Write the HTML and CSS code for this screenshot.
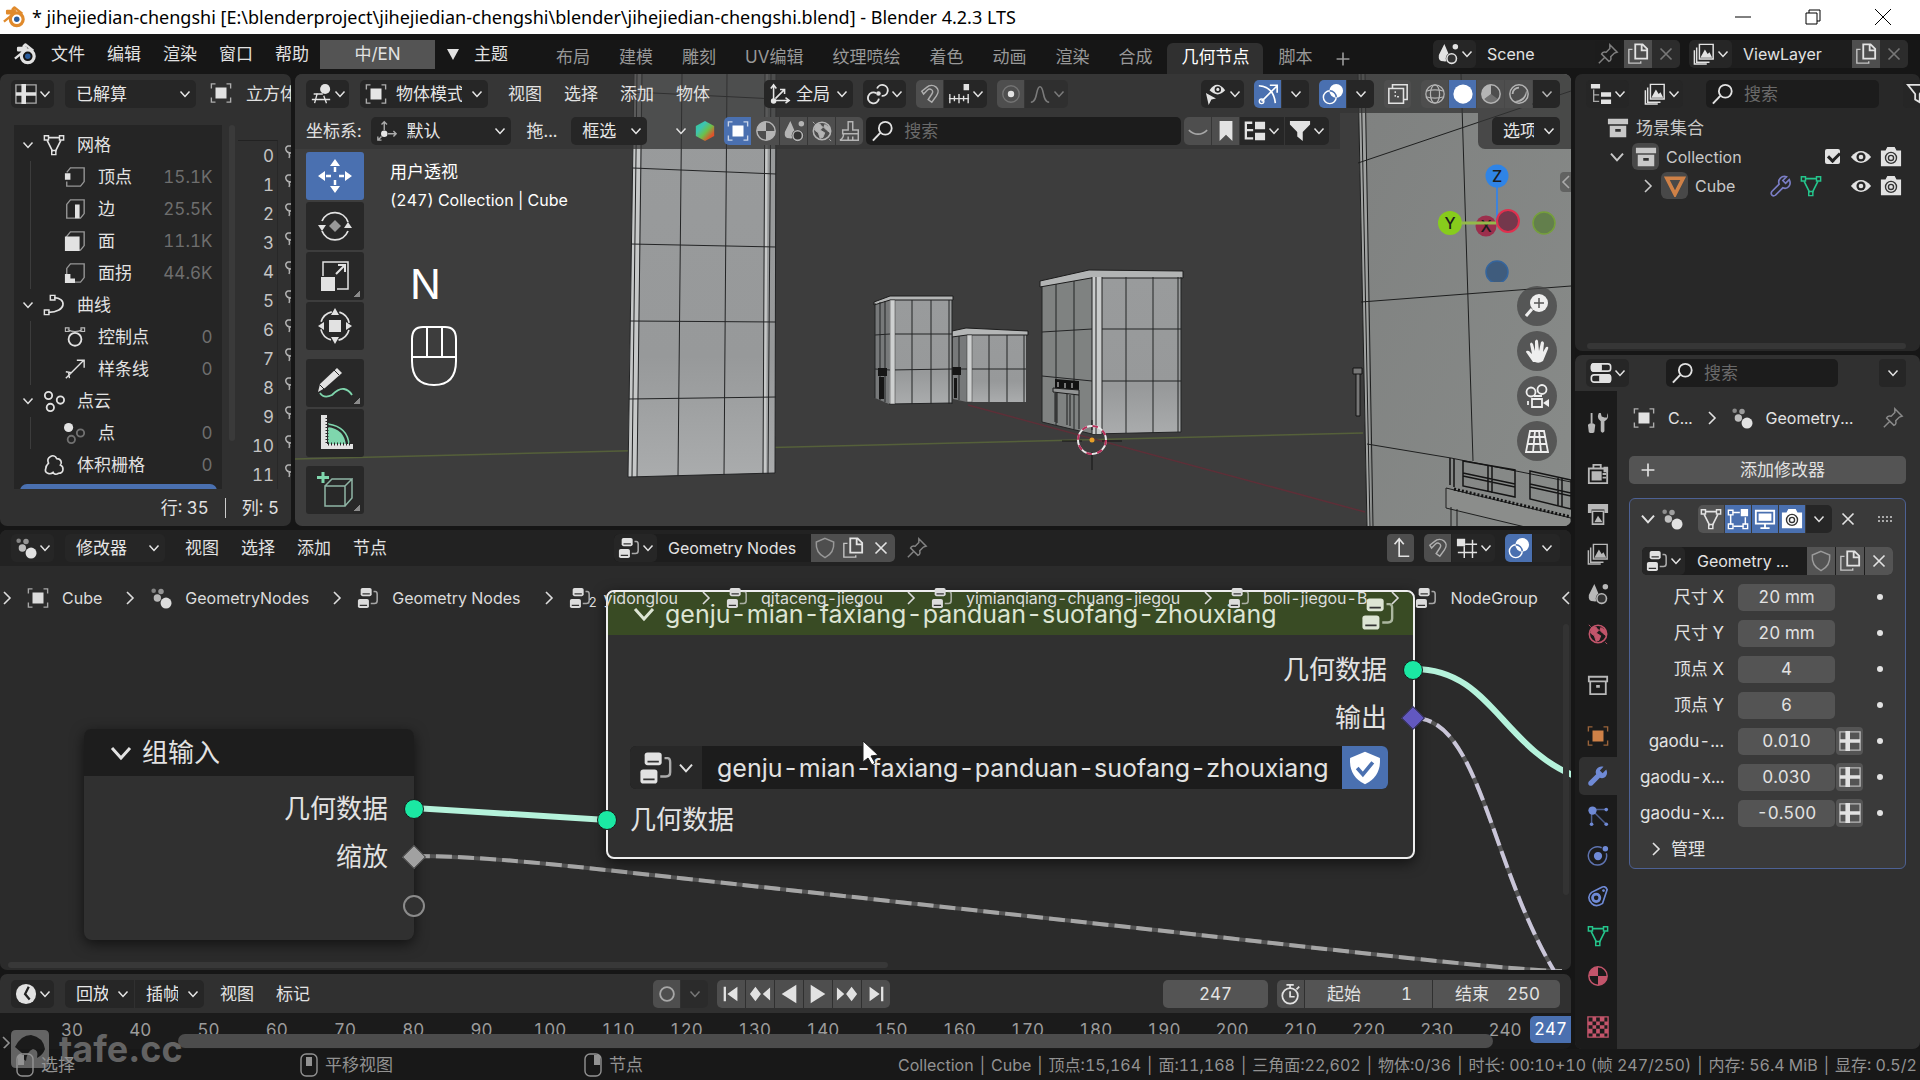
FILE: index.html
```html
<!DOCTYPE html>
<html lang="zh-CN">
<head>
    <meta charset="UTF-8">
    <meta name="viewport" content="width=device-width, initial-scale=1.0">
    <title>jihejiedian-chengshi - Blender 4.2.3 LTS</title>
    <link rel="stylesheet" href="styles.css">
</head>
<body>
    <!-- icon sprite -->
    <svg class="sprite" aria-hidden="true">
        <symbol id="i-logo" viewBox="0 0 24 24"><path d="M1 17L12 8H4.500V5.500H13L10.500 3.500 12.500 1.500 21 8.500" fill="none" stroke="currentColor" stroke-width="2.600" stroke-linejoin="round"/><circle cx="15" cy="14.500" r="7" fill="none" stroke="currentColor" stroke-width="3.500"/><circle class="logo-dot" cx="15" cy="14.500" r="3"/></symbol>
        <symbol id="i-chev" viewBox="0 0 12 12"><path d="M1.500 3.500L6 8.500l4.500-5" fill="none" stroke="currentColor" stroke-width="1.500"/></symbol>
        <symbol id="i-right" viewBox="0 0 12 16"><path d="M3 2l6 6-6 6" fill="none" stroke="currentColor" stroke-width="1.600"/></symbol>
        <symbol id="i-left" viewBox="0 0 12 16"><path d="M9 2L3 8l6 6" fill="none" stroke="currentColor" stroke-width="1.600"/></symbol>
        <symbol id="i-x" viewBox="0 0 24 24"><path d="M6 6l12 12M18 6L6 18" stroke="currentColor" stroke-width="1.800"/></symbol>
        <symbol id="i-plus" viewBox="0 0 24 24"><path d="M12 5v14M5 12h14" stroke="currentColor" stroke-width="1.800"/></symbol>
        <symbol id="i-sheet" viewBox="0 0 24 24"><path d="M1 2h22v20H1z" fill="none" stroke="currentColor" stroke-width="1.500" opacity=".7"/><path d="M7 1h5v22H7zM1 10h22v4H1z" fill="currentColor"/></symbol>
        <symbol id="i-object" viewBox="0 0 24 24"><path d="M1.500 7V2H6M18 2h4.500v5M22.500 17v5H18M6 22H1.500v-5" fill="none" stroke="currentColor" stroke-width="1.500" opacity=".7"/><path d="M6 6h12v12H6z" fill="currentColor"/></symbol>
        <symbol id="i-view3d" viewBox="0 0 24 24"><path d="M4 12h10M2 18h20M8 11l-3 11M15 14l3 8" stroke="currentColor" stroke-width="1.500" fill="none"/><circle cx="16.500" cy="6.500" r="5.500" fill="currentColor"/></symbol>
        <symbol id="i-mesh" viewBox="0 0 24 24"><path d="M6 4h12M4.500 7l6 12M19.500 7l-6 12" stroke="currentColor" stroke-width="1.800"/><path d="M1.500 2H6v4.500H1.500zM18 2h4.500v4.500H18zM9.500 18H14v4.500H9.500z" fill="none" stroke="currentColor" stroke-width="1.600"/></symbol>
        <symbol id="i-vert" viewBox="0 0 24 24"><path d="M3 7l4-5h15v15l-4 5H3v-5" fill="none" stroke="currentColor" stroke-width="1.500" opacity=".6"/><path d="M1 8h6v7H1z" fill="currentColor"/></symbol>
        <symbol id="i-edge" viewBox="0 0 24 24"><path d="M3 7l4-5h15v15l-4 5H3z" fill="none" stroke="currentColor" stroke-width="1.500" opacity=".6"/><path d="M12 7h5v15h-5z" fill="currentColor"/></symbol>
        <symbol id="i-face" viewBox="0 0 24 24"><path d="M3 7l4-5h15v15l-4 5H3z" fill="none" stroke="currentColor" stroke-width="1.500" opacity=".6"/><path d="M1 7h16v16H1z" fill="currentColor"/></symbol>
        <symbol id="i-corner" viewBox="0 0 24 24"><path d="M3 13V7l4-5h15v15l-4 5h-6" fill="none" stroke="currentColor" stroke-width="1.500" opacity=".6"/><path d="M1 13h6v5h5v5H1z" fill="currentColor"/></symbol>
        <symbol id="i-curve" viewBox="0 0 24 24"><path d="M12 4c14 0 14 16-6 16" fill="none" stroke="currentColor" stroke-width="1.800"/><path d="M8 1.500h5v5H8zM1.500 17.500h5v5h-5z" fill="none" stroke="currentColor" stroke-width="1.600"/></symbol>
        <symbol id="i-ctrl" viewBox="0 0 24 24"><circle cx="12" cy="14.500" r="7" fill="none" stroke="currentColor" stroke-width="2"/><path d="M4 4q8 4 16 0M1.500 2h4v4h-4zM18.500 2h4v4h-4z" fill="none" stroke="currentColor" stroke-width="1.200" opacity=".8"/></symbol>
        <symbol id="i-spline" viewBox="0 0 24 24"><path d="M2 22L21 3M14 2.500h8v8M2 15l6 1M6 22l-1-6" fill="none" stroke="currentColor" stroke-width="1.500"/></symbol>
        <symbol id="i-cloud3" viewBox="0 0 24 24"><g fill="none" stroke="currentColor" stroke-width="2"><circle cx="6" cy="6" r="4"/><circle cx="19" cy="11" r="4"/><circle cx="8" cy="19" r="4"/></g></symbol>
        <symbol id="i-point" viewBox="0 0 24 24"><circle cx="5" cy="6" r="5" fill="currentColor"/><g fill="none" stroke="currentColor" stroke-width="2" opacity=".4"><circle cx="18" cy="12" r="4"/><circle cx="8" cy="19" r="4"/></g></symbol>
        <symbol id="i-volume" viewBox="0 0 24 24"><path d="M6 10C3 3 12-1 15 5c5 0 6 5 4 7 4 2 4 9-2 9-3 2-5 1-6-1-3 3-10 1-8-4 0-3 1-4 3-6z" fill="none" stroke="currentColor" stroke-width="1.800"/></symbol>
        <symbol id="i-axes" viewBox="0 0 24 24"><path d="M5 21V3M2 6l3-4 3 4M5 19h16M18 16l4 3-4 3M7 17L17 7M12 7h5v5" fill="none" stroke="currentColor" stroke-width="1.700"/><circle cx="5" cy="19.500" r="3" fill="currentColor"/></symbol>
        <symbol id="i-orient" viewBox="0 0 24 24"><path d="M9 11V2M6 5l3-3 3 3M13 15h9M19 12l3 3-3 3M6 18l-4 4M2 18v4h4" fill="none" stroke="currentColor" stroke-width="1.500" opacity=".7"/><circle cx="9" cy="15" r="3.500" fill="currentColor"/></symbol>
        <symbol id="i-pivot" viewBox="0 0 24 24"><g fill="none" stroke="currentColor" stroke-width="2"><path d="M10 11a6 6 0 1 0 3 6M11 6a6 6 0 1 1 5 8"/></g><circle cx="12.500" cy="11.500" r="2.500" fill="currentColor"/></symbol>
        <symbol id="i-magnet" viewBox="0 0 24 24"><path d="M3 9l5-4C15-1 25 6 19 14l-5 7-4-3 4-6c3-4-2-7-5-4l-4 4z" fill="none" stroke="currentColor" stroke-width="1.600" opacity=".65"/></symbol>
        <symbol id="i-snapinc" viewBox="0 0 24 24"><path d="M1 17h22M2 12v10M7 14v6M12 12v10M17 14v6M22 12v10" stroke="currentColor" stroke-width="1.500"/><path d="M17 1h6v7h-6z" fill="currentColor"/></symbol>
        <symbol id="i-prop" viewBox="0 0 24 24"><circle cx="12" cy="12" r="9" fill="none" stroke="currentColor" stroke-width="1.500" opacity=".25"/><circle cx="12" cy="12" r="3.500" fill="currentColor"/></symbol>
        <symbol id="i-falloff" viewBox="0 0 24 24"><path d="M2 21c8 0 5-17 10-17s2 17 10 17" fill="none" stroke="currentColor" stroke-width="1.700"/></symbol>
        <symbol id="i-eyecursor" viewBox="0 0 24 24"><path d="M5 8q8-12 17 0-8 9-17 0z" fill="currentColor"/><circle cx="14" cy="7" r="3.500" fill="#222"/><circle cx="14" cy="7" r="1.700" fill="currentColor"/><path d="M1 11l11 6-5 1-3 6z" fill="currentColor"/></symbol>
        <symbol id="i-gizmo" viewBox="0 0 24 24"><path d="M2 3q16 1 18 19M5 20L22 3M14 2.500h8v8" fill="none" stroke="currentColor" stroke-width="1.800"/><circle cx="5" cy="20" r="2.500" fill="none" stroke="currentColor" stroke-width="1.500"/></symbol>
        <symbol id="i-overlay" viewBox="0 0 24 24"><circle cx="15.500" cy="8.500" r="7.500" fill="currentColor"/><circle cx="8.500" cy="15.500" r="7" fill="none" stroke="currentColor" stroke-width="1.600"/><path d="M8.500 8.500a7 7 0 0 1 7 7" fill="none" stroke="#4a70b0" stroke-width="1.600"/></symbol>
        <symbol id="i-xray" viewBox="0 0 24 24"><path d="M2 6h16v16H2zM6 6V2h16v16h-4" fill="none" stroke="currentColor" stroke-width="1.700"/><path d="M9 9v6h6" fill="none" stroke="currentColor" stroke-width="1.500" stroke-dasharray="2 2"/></symbol>
        <symbol id="i-wire" viewBox="0 0 24 24"><g fill="none" stroke="currentColor" stroke-width="1.400"><circle cx="12" cy="12" r="10"/><ellipse cx="12" cy="12" rx="5" ry="10"/><path d="M2 9q10-3 20 0M2 15q10 3 20 0"/></g></symbol>
        <symbol id="i-solid" viewBox="0 0 24 24"><circle cx="12" cy="12" r="10.500" fill="currentColor"/></symbol>
        <symbol id="i-mat" viewBox="0 0 24 24"><circle cx="12" cy="12" r="10" fill="none" stroke="currentColor" stroke-width="1.600"/><path d="M12 2v10h-10A10 10 0 0 1 12 2zM12 12h10a10 10 0 0 1-10 10z" fill="currentColor"/></symbol>
        <symbol id="i-preview" viewBox="0 0 24 24"><circle cx="12" cy="12" r="10" fill="none" stroke="currentColor" stroke-width="1.600"/><path d="M12 2v10l-8 6A10 10 0 0 1 12 2z" fill="currentColor"/><path d="M12 12l8 6a10 10 0 0 1-16 0z" fill="currentColor" opacity=".35"/></symbol>
        <symbol id="i-rendered" viewBox="0 0 24 24"><circle cx="12" cy="12" r="10" fill="none" stroke="currentColor" stroke-width="1.600"/><path d="M5 12a7 7 0 0 1 7-7" fill="none" stroke="currentColor" stroke-width="2"/><path d="M20 8a10 10 0 0 1-13 12q11-1 13-12z" fill="currentColor"/></symbol>
        <symbol id="i-hex" viewBox="0 0 24 24"><linearGradient id="hexg" x1="0" y1="0" x2="1" y2="1"><stop offset="0" stop-color="#35c98a"/><stop offset=".3" stop-color="#3cc4b4"/><stop offset=".55" stop-color="#6cc04a"/><stop offset=".8" stop-color="#e0522a"/></linearGradient><path d="M12 1l10 5.500v11L12 23 2 17.500v-11z" fill="url(#hexg)"/></symbol>
        <symbol id="i-scene" viewBox="0 0 24 24"><path d="M8 1l6 14q-1 6-7 5-6 0-5-7z" fill="currentColor"/><circle cx="20" cy="4" r="3" fill="currentColor"/><circle cx="16" cy="17" r="6.500" fill="#333"/><circle cx="16" cy="17" r="5.200" fill="none" stroke="currentColor" stroke-width="1.700"/></symbol>
        <symbol id="i-world" viewBox="0 0 24 24"><circle cx="12" cy="12" r="9.500" fill="none" stroke="currentColor" stroke-width="1.700"/><path d="M5 5q5-2 6 1l2 2-3 3 5 3-2 5-3 1-2-6-4-3zM15 5l5 3 1 6-4-3-3-3zM2 2l2 2M20 21l2 2" fill="currentColor" stroke="currentColor"/></symbol>
        <symbol id="i-brush" viewBox="0 0 24 24"><path d="M10 11V2h5v9h6v4H4v-4zM5 15q0 5-4 7h20v-7M10 18v4M15 18v4" fill="none" stroke="currentColor" stroke-width="1.600"/></symbol>
        <symbol id="i-search" viewBox="0 0 24 24"><circle cx="14.500" cy="9" r="7" fill="none" stroke="currentColor" stroke-width="2"/><path d="M9 14l-8 8.500" stroke="currentColor" stroke-width="2.200"/></symbol>
        <symbol id="i-lid" viewBox="0 0 24 24"><path d="M2 11q10 9 20 0" fill="none" stroke="currentColor" stroke-width="1.800" opacity=".6"/></symbol>
        <symbol id="i-bookmark" viewBox="0 0 24 24"><path d="M5 1h14v22l-7-7-7 7z" fill="currentColor"/></symbol>
        <symbol id="i-tree" viewBox="0 0 24 24"><path d="M9 3H2v17h8M2 11h8" fill="none" stroke="currentColor" stroke-width="2.500"/><path d="M12 2h11v8H12zM12 14h11v8H12z" fill="currentColor"/></symbol>
        <symbol id="i-filter" viewBox="0 0 24 24"><path d="M1 1h22v4l-8 8v10l-6-5v-5L1 5z" fill="currentColor"/></symbol>
        <symbol id="i-filterline" viewBox="0 0 24 24"><path d="M2 2h20l-7 10v9l-5-3v-6z" fill="none" stroke="currentColor" stroke-width="2"/></symbol>
        <symbol id="i-outliner" viewBox="0 0 24 24"><path d="M4 7v13h6M4 13h6" fill="none" stroke="currentColor" stroke-width="1.500" opacity=".7"/><path d="M1 1h10v5H1zM12 10h11v5H12zM12 18h11v5H12z" fill="currentColor"/></symbol>
        <symbol id="i-layers" viewBox="0 0 24 24"><path d="M7 1.500h15v16H7zM4 5v16h14M1.500 8v15H15" fill="none" stroke="currentColor" stroke-width="1.600"/><path d="M8 16l5-9 3 5 2-2 3 6z" fill="currentColor"/></symbol>
        <symbol id="i-pin" viewBox="0 0 24 24"><path d="M14 2l8 8-3 1-4 4q1 4-2 5l-8-8q1-3 5-2l4-4zM8 16l-6 6" fill="none" stroke="currentColor" stroke-width="1.600"/></symbol>
        <symbol id="i-copy" viewBox="0 0 24 24"><path d="M9 1.500h8l5 5V17H9zM16 2v6h6" fill="none" stroke="currentColor" stroke-width="2"/><path d="M6 7H2v15h13v-2" fill="none" stroke="currentColor" stroke-width="1.500" opacity=".8"/></symbol>
        <symbol id="i-coll" viewBox="0 0 24 24"><path d="M1 2h22v6H1zM3 9.500h18V22H3z" fill="currentColor"/><path d="M9 13h6v3H9z" fill="#303030"/></symbol>
        <symbol id="i-collline" viewBox="0 0 24 24"><path d="M2 3h20v5H2zM3.500 8h17v14h-17z" fill="none" stroke="currentColor" stroke-width="2"/><path d="M10 12h4v3h-4z" fill="currentColor"/></symbol>
        <symbol id="i-tri" viewBox="0 0 24 24"><path d="M3 3.500h18L12 21z" fill="none" stroke="currentColor" stroke-width="4"/></symbol>
        <symbol id="i-wrench" viewBox="0 0 24 24"><path d="M21 5l-4 4-3-3 4-4c-5-2-10 3-8 8l-8 8c-2 3 1 6 4 4l8-8c5 2 10-3 7-9z" fill="currentColor"/></symbol>
        <symbol id="i-wrenchline" viewBox="0 0 24 24"><path d="M21 5l-4 4-3-3 4-4c-5-2-10 3-8 8l-8 8c-2 3 1 6 4 4l8-8c5 2 10-3 7-9z" fill="none" stroke="currentColor" stroke-width="1.800"/></symbol>
        <symbol id="i-eye" viewBox="0 0 24 24"><path d="M1 12Q12-1 23 12 12 25 1 12z" fill="currentColor"/><circle cx="12" cy="12" r="5" fill="#262626"/><circle cx="12" cy="12" r="2.500" fill="currentColor"/></symbol>
        <symbol id="i-camera" viewBox="0 0 24 24"><path d="M1 5h5l2-4h8l2 4h5v17H1z" fill="currentColor"/><circle cx="12" cy="13" r="6" fill="none" stroke="#333" stroke-width="1.500"/><circle cx="12" cy="13" r="2.800" fill="none" stroke="#333" stroke-width="1.500"/></symbol>
        <symbol id="i-props" viewBox="0 0 24 24"><rect x="1.500" y="2" width="21" height="8" rx="3" fill="none" stroke="currentColor" stroke-width="1.800"/><rect x="1" y="1" width="12" height="10" rx="3" fill="currentColor"/><rect x="1.500" y="14" width="21" height="8" rx="3" fill="none" stroke="currentColor" stroke-width="1.800"/><rect x="10" y="13" width="13" height="10" rx="3" fill="currentColor"/></symbol>
        <symbol id="i-tools" viewBox="0 0 24 24"><path d="M4 1h2v11H4zM1 14q4-4 8 0l-1 8q-3 2-6 0zM13 1q-3 6 2 9v11q2 3 4 0V10q6-3 3-9v5h-3l-3-1-1-4z" fill="currentColor"/></symbol>
        <symbol id="i-render" viewBox="0 0 24 24"><path d="M7 5V2h8v3M2 6h20v16H2z" fill="none" stroke="currentColor" stroke-width="2"/><path d="M5 9h11v10H5zM18 4h5v6h-5z" fill="currentColor"/><path d="M17 12h4M17 16h4" stroke="currentColor" stroke-width="2"/></symbol>
        <symbol id="i-output" viewBox="0 0 24 24"><path d="M1 1h22v10h-4V7H5v4H1z" fill="currentColor"/><path d="M6 9h12v14H6z" fill="none" stroke="currentColor" stroke-width="1.800"/><path d="M8 21l4-7 5 7z" fill="currentColor"/></symbol>
        <symbol id="i-particles" viewBox="0 0 24 24"><path d="M6 5h15M5 6v15M7 7l14 14" stroke="currentColor" stroke-width="1.600" opacity=".6"/><circle cx="6" cy="6" r="4.500" fill="currentColor"/><g fill="currentColor"><circle cx="21" cy="5" r="2"/><circle cx="5" cy="21" r="2"/><circle cx="21" cy="21" r="2"/></g></symbol>
        <symbol id="i-physics" viewBox="0 0 24 24"><path d="M16 3A10 10 0 1 0 21 9" fill="none" stroke="currentColor" stroke-width="1.600" opacity=".8"/><circle cx="12" cy="12" r="4.500" fill="currentColor"/><circle cx="20" cy="4" r="3" fill="currentColor"/></symbol>
        <symbol id="i-constraint" viewBox="0 0 24 24"><path d="M15 3q5-3 7 2l-5 15q-7 5-12 0-6-7 0-12z" fill="none" stroke="currentColor" stroke-width="1.800"/><circle cx="10" cy="14" r="4" fill="none" stroke="currentColor" stroke-width="3"/><circle cx="18" cy="6" r="1.500" fill="currentColor"/></symbol>
        <symbol id="i-checker" viewBox="0 0 24 24"><path d="M1 1h22v22H1z" fill="none" stroke="currentColor" stroke-width="1.500"/><path d="M6 1h4v5H6zM14 1h5v5h-5zM1 6h5v4H1zM10 6h4v4h-4zM19 6h4v4h-4zM6 10h4v4H6zM14 10h5v4h-5zM1 14h5v5H1zM10 14h4v5h-4zM19 14h4v5h-4zM6 19h4v4H6zM14 19h5v4h-5z" fill="currentColor"/></symbol>
        <symbol id="i-geo" viewBox="0 0 24 24"><circle cx="4" cy="4" r="2.500" fill="currentColor" opacity=".5"/><circle cx="12" cy="5" r="3" fill="currentColor" opacity=".6"/><circle cx="8" cy="12" r="4" fill="currentColor" opacity=".8"/><circle cx="17.500" cy="17.500" r="6" fill="currentColor"/></symbol>
        <symbol id="i-editmode" viewBox="0 0 24 24"><path d="M4 7v11M7 20h11M20 10v8M6 5h8" stroke="currentColor" stroke-width="1.600"/><path d="M1.500 2.500h5v5h-5zM1.500 17.500h5v5h-5zM17.500 17.500h5v5h-5z" fill="none" stroke="currentColor" stroke-width="1.500"/><path d="M15 1h8v8h-8z" fill="currentColor"/></symbol>
        <symbol id="i-monitor" viewBox="0 0 24 24"><path d="M2 3h20v14H2zM7 22h10M12 17v5" fill="none" stroke="currentColor" stroke-width="2"/><path d="M5 6h14v8H5z" fill="currentColor"/></symbol>
        <symbol id="i-nodes" viewBox="0 0 24 24"><rect x="4" y="1" width="12" height="9" rx="2" fill="currentColor"/><rect x="1" y="13" width="12" height="10" rx="2" fill="currentColor"/><path d="M6 7.500h8M3 20h8" stroke="#333" stroke-width="1.300"/><path d="M18 5h2q2 0 2 3v7q0 3-3 3h-4" fill="none" stroke="currentColor" stroke-width="1.700" opacity=".7"/></symbol>
        <symbol id="i-shield" viewBox="0 0 24 24"><path d="M12 1.500l9.500 4q1 12-9.500 17Q1.500 17.500 2.500 5.500z" fill="none" stroke="currentColor" stroke-width="1.600"/></symbol>
        <symbol id="i-shieldon" viewBox="0 0 24 24"><path d="M12 .500l10.500 4.500q1 13-10.500 18.500Q.500 18 1.500 5z" fill="currentColor"/><path d="M6.500 12l4 4.500L17.500 8" fill="none" stroke="#4a70b0" stroke-width="2.600"/></symbol>
        <symbol id="i-up" viewBox="0 0 24 24"><path d="M21 21H10V3M5 8l5-6 5 6" fill="none" stroke="currentColor" stroke-width="1.800"/></symbol>
        <symbol id="i-grid" viewBox="0 0 24 24"><path d="M9 10v13M18 3v20M10 8h13M2 17h21" stroke="currentColor" stroke-width="1.600"/><path d="M1 2h9v8H1z" fill="currentColor"/></symbol>
        <symbol id="i-clock" viewBox="0 0 24 24"><circle cx="12" cy="12" r="11" fill="currentColor"/><path d="M15 4l-4 8 5 6" fill="none" stroke="#222" stroke-width="2.500"/></symbol>
        <symbol id="i-record" viewBox="0 0 24 24"><circle cx="12" cy="12" r="7.500" fill="none" stroke="currentColor" stroke-width="2" opacity=".6"/></symbol>
        <symbol id="i-first" viewBox="0 0 24 24"><path d="M4 4h2.500v16H4zM19 4v16L8 12z" fill="currentColor"/></symbol>
        <symbol id="i-last" viewBox="0 0 24 24"><path d="M17.500 4H20v16h-2.500zM5 4v16l11-8z" fill="currentColor"/></symbol>
        <symbol id="i-prevkey" viewBox="0 0 24 24"><path d="M7 4l6 8-6 8-6-8zM23 5v14l-8-7z" fill="currentColor"/></symbol>
        <symbol id="i-nextkey" viewBox="0 0 24 24"><path d="M17 4l6 8-6 8-6-8zM1 5v14l8-7z" fill="currentColor"/></symbol>
        <symbol id="i-back" viewBox="0 0 24 24"><path d="M20 2v20L4 12z" fill="currentColor"/></symbol>
        <symbol id="i-play" viewBox="0 0 24 24"><path d="M4 2v20l16-10z" fill="currentColor"/></symbol>
        <symbol id="i-stopwatch" viewBox="0 0 24 24"><circle cx="11" cy="14" r="8.500" fill="none" stroke="currentColor" stroke-width="1.900"/><path d="M7 2h8M11 2v4M18 7l3-3M11 9v6h5" fill="none" stroke="currentColor" stroke-width="1.900"/></symbol>
        <symbol id="i-lmb" viewBox="0 0 18 24"><rect x="1" y="1" width="16" height="22" rx="5" fill="none" stroke="currentColor" stroke-width="1.400"/><path d="M2 2h6v10H2z" fill="currentColor"/></symbol>
        <symbol id="i-mmb" viewBox="0 0 18 24"><rect x="1" y="1" width="16" height="22" rx="5" fill="none" stroke="currentColor" stroke-width="1.400"/><path d="M6 4h6v9H6z" fill="currentColor"/></symbol>
        <symbol id="i-rmb" viewBox="0 0 18 24"><rect x="1" y="1" width="16" height="22" rx="5" fill="none" stroke="currentColor" stroke-width="1.400"/><path d="M10 2h6v10h-6z" fill="currentColor"/></symbol>
        <symbol id="i-hook" viewBox="0 0 8 16"><path d="M8 2H5Q2 3 3 6t5 3M6 9q1 3 0 5" fill="none" stroke="currentColor" stroke-width="1.500"/></symbol>
        <symbol id="t-move" viewBox="0 0 36 36"><path d="M18 1l5 7H13zM18 35l5-7H13zM1 18l7-5v10zM35 18l-7-5v10z" fill="currentColor"/><path d="M18 9v5M18 22v5M9 18h5M22 18h5" stroke="currentColor" stroke-width="2.500"/></symbol>
        <symbol id="t-rotate" viewBox="0 0 36 36"><path d="M5 13a14 14 0 0 1 26 1M31 23a14 14 0 0 1-26 0" fill="none" stroke="currentColor" stroke-width="1.800"/><path d="M1 17h8l-4 6zM27 20h8l-4-6z" fill="currentColor"/><path d="M18 12l6 6-6 6-6-6z" fill="currentColor" opacity=".6"/></symbol>
        <symbol id="t-scale" viewBox="0 0 36 36"><path d="M6 18V4h25v27H20" fill="none" stroke="currentColor" stroke-width="1.500"/><path d="M4 19h14v14H4z" fill="currentColor"/><path d="M19 16l8-8M21 7h7v7" fill="none" stroke="currentColor" stroke-width="2"/></symbol>
        <symbol id="t-transform" viewBox="0 0 36 36"><circle cx="18" cy="18" r="14.500" fill="none" stroke="currentColor" stroke-width="1.700" stroke-dasharray="15 7.780" stroke-dashoffset="-4"/><path d="M18 0l4 7h-8zM18 36l4-7h-8zM1 18l6-4v8zM35 18l-6-4v8zM12 12h12v12H12z" fill="currentColor"/></symbol>
        <symbol id="t-annotate" viewBox="0 0 36 36"><path d="M3 28q4 6 12 2 7-7 12-6 5 1 8 6" fill="none" stroke="#7fd6ad" stroke-width="1.800"/><path d="M1 27l2-8L20 3l5 5L8 23z" fill="currentColor"/><path d="M3 20l5 5M17 5l5 5" stroke="#282828"/></symbol>
        <symbol id="t-measure" viewBox="0 0 36 36"><path d="M11 12q16 2 18 18H11z" fill="#7fd6ad"/><path d="M11 9q20 3 21 21" fill="none" stroke="#7fd6ad" stroke-width="1.500"/><path d="M4 0h6v29h26v5H4z" fill="currentColor"/><path d="M10 3v26h25" fill="none" stroke="#282828" stroke-width="3" stroke-dasharray="1 2"/></symbol>
        <symbol id="t-cube" viewBox="0 0 36 36"><path d="M8 14h20v20H8zM8 14l7-7h20l-7 7M35 7v19l-7 8" fill="none" stroke="#8fb5a5" stroke-width="1.500"/><path d="M6 0v11M0 5.500h12" stroke="#7fd6ad" stroke-width="3"/></symbol>
    </svg>

    <header class="titlebar">
        <svg class="icon app-icon"><use href="#i-logo"/></svg>
        <h1>* jihejiedian-chengshi [E:\blenderproject\jihejiedian-chengshi\blender\jihejiedian-chengshi.blend] - Blender 4.2.3 LTS</h1>
        <div class="window-buttons">
            <button aria-label="最小化"><svg viewBox="0 0 16 16"><path d="M0 8h16" stroke="#000"/></svg></button>
            <button aria-label="还原"><svg viewBox="0 0 16 16"><path d="M1 4h11v11H1zM4 4V1h11v11h-3" fill="none" stroke="#000"/></svg></button>
            <button aria-label="关闭"><svg viewBox="0 0 16 16"><path d="M0 0l16 16M16 0L0 16" stroke="#000"/></svg></button>
        </div>
    </header>

    <nav class="topbar">
        <svg class="icon topbar-logo"><use href="#i-logo"/></svg>
        <div class="menu">
            <button>文件</button><button>编辑</button><button>渲染</button><button>窗口</button><button>帮助</button>
        </div>
        <button class="lang-button">中/EN</button>
        <button class="theme-button"><svg viewBox="0 0 12 12"><path d="M0 1h12L6 12z" fill="currentColor"/></svg>主题</button>
        <div class="tabs">
            <a href="#">布局</a><a href="#">建模</a><a href="#">雕刻</a><a href="#">UV编辑</a><a href="#">纹理喷绘</a><a href="#">着色</a><a href="#">动画</a><a href="#">渲染</a><a href="#">合成</a><a href="#" class="active">几何节点</a><a href="#">脚本</a>
            <button aria-label="添加工作区"><svg class="icon"><use href="#i-plus"/></svg></button>
        </div>
        <div class="id-block scene-block">
            <button class="drop"><svg class="icon"><use href="#i-scene"/></svg><svg class="chev"><use href="#i-chev"/></svg></button>
            <input type="text" value="Scene" aria-label="场景">
            <svg class="icon dim"><use href="#i-pin"/></svg>
            <button class="tool"><svg class="icon"><use href="#i-copy"/></svg></button>
            <button class="tool off"><svg class="icon"><use href="#i-x"/></svg></button>
        </div>
        <div class="id-block layer-block">
            <button class="drop"><svg class="icon"><use href="#i-layers"/></svg><svg class="chev"><use href="#i-chev"/></svg></button>
            <input type="text" value="ViewLayer" aria-label="视图层">
            <button class="tool"><svg class="icon"><use href="#i-copy"/></svg></button>
            <button class="tool off"><svg class="icon"><use href="#i-x"/></svg></button>
        </div>
    </nav>

    <main class="workspace">
        <div class="main-column">
            <div class="top-row">
                <section class="area spreadsheet">
                    <div class="area-header">
                        <button class="drop"><svg class="icon"><use href="#i-sheet"/></svg><svg class="chev"><use href="#i-chev"/></svg></button>
                        <label class="select state-select"><select aria-label="求值状态"><option>已解算</option></select><svg class="chev"><use href="#i-chev"/></svg></label>
                        <span class="object-name"><svg class="icon"><use href="#i-object"/></svg>立方体</span>
                    </div>
                    <div class="sheet-body">
                        <ul class="dataset-tree">
                            <li><svg class="chev"><use href="#i-chev"/></svg><svg class="icon"><use href="#i-mesh"/></svg><span>网格</span></li>
                            <li class="child"><svg class="icon"><use href="#i-vert"/></svg><span>顶点</span><em>15.1K</em></li>
                            <li class="child"><svg class="icon"><use href="#i-edge"/></svg><span>边</span><em>25.5K</em></li>
                            <li class="child"><svg class="icon"><use href="#i-face"/></svg><span>面</span><em>11.1K</em></li>
                            <li class="child"><svg class="icon"><use href="#i-corner"/></svg><span>面拐</span><em>44.6K</em></li>
                            <li><svg class="chev"><use href="#i-chev"/></svg><svg class="icon"><use href="#i-curve"/></svg><span>曲线</span></li>
                            <li class="child"><svg class="icon"><use href="#i-ctrl"/></svg><span>控制点</span><em>0</em></li>
                            <li class="child"><svg class="icon"><use href="#i-spline"/></svg><span>样条线</span><em>0</em></li>
                            <li><svg class="chev"><use href="#i-chev"/></svg><svg class="icon"><use href="#i-cloud3"/></svg><span>点云</span></li>
                            <li class="child"><svg class="icon"><use href="#i-point"/></svg><span>点</span><em>0</em></li>
                            <li><svg class="chev"></svg><svg class="icon"><use href="#i-volume"/></svg><span>体积栅格</span><em>0</em></li>
                            <li class="selected"></li>
                        </ul>
                        <div class="tree-scroll"></div>
                        <ol class="row-numbers">
                            <li>0</li><li>1</li><li>2</li><li>3</li><li>4</li><li>5</li><li>6</li><li>7</li><li>8</li><li>9</li><li>10</li><li>11</li>
                        </ol>
                        <div class="clipped-column">
                            <svg><use href="#i-hook"/></svg><svg><use href="#i-hook"/></svg><svg><use href="#i-hook"/></svg><svg><use href="#i-hook"/></svg><svg><use href="#i-hook"/></svg><svg><use href="#i-hook"/></svg><svg><use href="#i-hook"/></svg><svg><use href="#i-hook"/></svg><svg><use href="#i-hook"/></svg><svg><use href="#i-hook"/></svg><svg><use href="#i-hook"/></svg><svg><use href="#i-hook"/></svg>
                        </div>
                    </div>
                    <footer class="sheet-footer"><span>行: 35</span><b></b><span>列: 5</span></footer>
                </section>

                <section class="area viewport">
                    <svg class="scene" viewBox="295 74 1276 452" preserveAspectRatio="xMidYMid slice">
                        <defs>
                            <linearGradient id="wall" x1="0" y1="0" x2="0" y2="1"><stop offset="0" stop-color="#999b9c"/><stop offset=".7" stop-color="#97999a"/><stop offset="1" stop-color="#aaacad"/></linearGradient>
                            <linearGradient id="near" x1="0" y1="0" x2="1" y2="1"><stop offset="0" stop-color="#7f8180"/><stop offset="1" stop-color="#888b89"/></linearGradient>
                        </defs>
                        <path d="M295 459L1363 433" stroke="#55603a" stroke-width="1.500"/>
                        <path d="M968 405L1365 512" stroke="#5e2f38" stroke-width="1.500"/>
                        <!-- tall tower -->
                        <path d="M634 74h142l-1 399-147 4z" fill="url(#wall)"/>
                        <path d="M634 74h7l-4 403h-9zM765 74h3l-2 399h-3z" fill="#c6c8c8"/>
                        <path d="M634 74l-6 403M637 74l-5 403M642 74l-5 403M682 74l-4 402M727 74l-3 401M765 74l-2 400M771 74l-3 400M776 74l-1 399M628 477l147-4M633 92l143 7M633 168l143 6M631 244l145 3M630 321l146 1M629 399l147-2" fill="none" stroke="#232425"/>
                        <!-- small blocks -->
                        <path d="M953 334l14-2v70l-14-3z" fill="#77797a"/><path d="M967 332h59v70h-59z" fill="url(#wall)"/>
                        <path d="M952 331l14-3 62 3v4h-61l-15 2z" fill="#b4b6b6" stroke="#1c1c1c"/>
                        <path d="M989 335v67M1007 335v67M1024 335v67M959 336v64M953 369h73" stroke="#232425"/><path d="M967 335h5v67h-5z" fill="#ced0d0" stroke="#333" stroke-width=".500"/>
                        <path d="M952 367h9v8h-9zM954 378h3v20h-3z" fill="#161616"/>
                        <path d="M875 302l14-3v105l-14-6z" fill="#77797a"/><path d="M889 299h63v104l-63 1z" fill="url(#wall)"/>
                        <path d="M874 302l16-6h63v4h-63l-16 5z" fill="#b4b6b6" stroke="#1c1c1c"/>
                        <path d="M912 300v104M931 300v104M949 300v104M952 300v104M875 303v95M880 302v98M885 301v101M875 335l15-1h62M875 369l15 1 62-1M889 404l63-1" fill="none" stroke="#232425"/><path d="M890 300h5v104h-5z" fill="#ced0d0" stroke="#333" stroke-width=".500"/>
                        <path d="M878 368h9v8h-9zM879 377h5v22h-5z" fill="#161616"/>
                        <!-- main block -->
                        <path d="M1042 286l50-9v157l-50-12z" fill="#7f8281"/><path d="M1092 277h89v155l-89 2z" fill="url(#wall)"/>
                        <path d="M1040 281l49-11 94 1v7h-92l-51 9z" fill="#b2b4b4" stroke="#1c1c1c"/>
                        <path d="M1042 286v136l50 12 89-2V277M1056 284v141M1074 281v148M1126 277v156M1153 277v156M1178 277v155M1042 332l50-3h89M1042 376l50 5h89" fill="none" stroke="#232425"/>
                        <path d="M1092 277h10v157h-10z" fill="#c9cbcb"/><path d="M1092 277v157M1096 277v157M1102 277v157" stroke="#222"/>
                        <path d="M1055 379l24 2v9l-24-2z" fill="#111"/><path d="M1058 382v5M1065 383v5M1072 383v5" stroke="#777" stroke-width="2"/>
                        <path d="M1053 388l26 2v5l-26-3zM1055 393v29M1057 393v30M1067 394v31M1070 395v31M1079 395v34" fill="#929494" stroke="#1c1c1c"/>
                        <!-- near building on the right -->
                        <path d="M1358 74h213v452h-204z" fill="url(#near)"/><path d="M1358 74h7l6 452h-4z" fill="#a0a2a1"/>
                        <path d="M1358 74l9 452M1361 74l9 452M1365 74l8 452M1461 74l12 387M1358 163l213-72M1361 302l210-16M1367 444l84 14 120 24" fill="none" stroke="#1e1f1f"/>
                        <path d="M1353 368h9v6h-9zM1356 374v42h4v-42" fill="#777" stroke="#151515"/>
                        <path d="M1450 458v27M1454 459v28M1463 461l52 9v27l-52-11zM1530 471l41 9v29l-41-10zM1488 465v27M1492 466v27M1463 473l52 11M1463 476l52 11M1530 484l41 9M1530 487l41 9M1558 478v28M1562 478v29" fill="none" stroke="#151515" stroke-width="1.500"/>
                        <path d="M1446 488l125 30v20l-125-30z" fill="#8b8d8b" stroke="#1e1f1f"/><path d="M1454 489l117 28" stroke="#111" stroke-width="3" stroke-dasharray="2 2"/>
                        <path d="M1451 507v19M1457 509v17" stroke="#1e1f1f"/>
                        <!-- 3d cursor -->
                        <path d="M1062 441h20M1102 441h20M1092 420v10M1092 452v18" stroke="#151515"/>
                        <circle cx="1092" cy="440" r="14" fill="none" stroke="#e8e8e8" stroke-width="2"/><circle cx="1092" cy="440" r="14" fill="none" stroke="#b8305a" stroke-width="2" stroke-dasharray="5.500 5.500"/>
                        <circle cx="1092" cy="440" r="2.500" fill="#e8a028"/>
                    </svg>
                    <div class="area-header view-header">
                        <button class="drop"><svg class="icon"><use href="#i-view3d"/></svg><svg class="chev"><use href="#i-chev"/></svg></button>
                        <label class="select mode-select"><svg class="icon"><use href="#i-object"/></svg><select aria-label="模式"><option>物体模式</option></select><svg class="chev"><use href="#i-chev"/></svg></label>
                        <div class="menu"><button>视图</button><button>选择</button><button>添加</button><button>物体</button></div>
                        <div class="transform-tools">
                            <label class="select orient-select"><svg class="icon"><use href="#i-axes"/></svg><select aria-label="变换坐标系"><option>全局</option></select><svg class="chev"><use href="#i-chev"/></svg></label>
                            <button class="drop"><svg class="icon"><use href="#i-pivot"/></svg><svg class="chev"><use href="#i-chev"/></svg></button>
                            <div class="group"><button class="tool"><svg class="icon"><use href="#i-magnet"/></svg></button><button class="drop"><svg class="icon"><use href="#i-snapinc"/></svg><svg class="chev"><use href="#i-chev"/></svg></button></div>
                            <div class="group"><button class="tool"><svg class="icon"><use href="#i-prop"/></svg></button><button class="drop faded"><svg class="icon"><use href="#i-falloff"/></svg><svg class="chev"><use href="#i-chev"/></svg></button></div>
                        </div>
                        <div class="view-tools">
                            <button class="drop"><svg class="icon"><use href="#i-eyecursor"/></svg><svg class="chev"><use href="#i-chev"/></svg></button>
                            <div class="group"><button class="tool on"><svg class="icon"><use href="#i-gizmo"/></svg></button><button class="tool dark"><svg class="chev"><use href="#i-chev"/></svg></button></div>
                            <div class="group"><button class="tool on"><svg class="icon"><use href="#i-overlay"/></svg></button><button class="tool dark"><svg class="chev"><use href="#i-chev"/></svg></button></div>
                            <button class="tool"><svg class="icon"><use href="#i-xray"/></svg></button>
                            <div class="group shading"><button class="tool"><svg class="icon"><use href="#i-wire"/></svg></button><button class="tool on"><svg class="icon"><use href="#i-solid"/></svg></button><button class="tool"><svg class="icon"><use href="#i-preview"/></svg></button><button class="tool"><svg class="icon"><use href="#i-rendered"/></svg></button><button class="tool dark"><svg class="chev"><use href="#i-chev"/></svg></button></div>
                        </div>
                    </div>
                    <div class="tool-settings">
                        <div class="settings-left">
                            <span>坐标系:</span>
                            <label class="select coord-select"><svg class="icon"><use href="#i-orient"/></svg><select aria-label="坐标系"><option>默认</option></select><svg class="chev"><use href="#i-chev"/></svg></label>
                            <span class="drag-label">拖...</span>
                            <label class="select drag-select"><select aria-label="拖动"><option>框选</option></select><svg class="chev"><use href="#i-chev"/></svg></label>
                            <button class="plain"><svg class="chev"><use href="#i-chev"/></svg><svg class="icon"><use href="#i-hex"/></svg></button>
                            <div class="group shading"><button class="tool on"><svg class="icon"><use href="#i-object"/></svg></button><button class="tool"><svg class="icon"><use href="#i-mat"/></svg></button><button class="tool"><svg class="icon"><use href="#i-scene"/></svg></button><button class="tool"><svg class="icon"><use href="#i-world"/></svg></button><button class="tool"><svg class="icon"><use href="#i-brush"/></svg></button></div>
                            <label class="search view-search"><svg class="icon"><use href="#i-search"/></svg><input type="text" placeholder="搜索" aria-label="搜索"></label>
                            <div class="group"><button class="tool"><svg class="icon"><use href="#i-lid"/></svg></button><button class="tool"><svg class="icon"><use href="#i-bookmark"/></svg></button><button class="drop"><svg class="icon"><use href="#i-tree"/></svg><svg class="chev"><use href="#i-chev"/></svg></button><button class="drop"><svg class="icon"><use href="#i-filter"/></svg><svg class="chev"><use href="#i-chev"/></svg></button></div>
                        </div>
                        <div class="settings-right"><label class="select options-select"><select aria-label="选项"><option>选项</option></select><svg class="chev"><use href="#i-chev"/></svg></label></div>
                    </div>
                    <div class="view-body">
                        <div class="toolbar">
                            <button class="active"><svg><use href="#t-move"/></svg></button>
                            <button><svg><use href="#t-rotate"/></svg></button>
                            <button class="more"><svg><use href="#t-scale"/></svg></button>
                            <button><svg><use href="#t-transform"/></svg></button>
                            <button class="split more"><svg><use href="#t-annotate"/></svg></button>
                            <button><svg><use href="#t-measure"/></svg></button>
                            <button class="split more"><svg><use href="#t-cube"/></svg></button>
                        </div>
                        <div class="view-info">
                            <p>用户透视</p>
                            <p class="latin">(247) Collection | Cube</p>
                            <kbd>N</kbd>
                            <svg class="mouse-keys" viewBox="0 0 46 60"><path d="M1 13Q1 1 12 1h22q11 0 11 12v22q0 24-22 24T1 35zM1 31h44M16 1v30M31 1v30" fill="none" stroke="#fff" stroke-width="2"/></svg>
                        </div>
                        <div class="view-nav">
                            <svg class="gizmo" viewBox="0 0 120 130">
                                <path d="M60 24v47" stroke="#3d83dc" stroke-width="2"/>
                                <circle cx="60" cy="24" r="11.500" fill="#2f84e6"/><circle cx="13" cy="71" r="12" fill="#87cc1c"/>
                                <circle cx="49" cy="74" r="10.500" fill="#9c2f4c"/><text x="49" y="80">X</text>
                                <path d="M24 71h35" stroke="#94b94a" stroke-width="3"/>
                                <circle cx="71" cy="69" r="11" fill="#74384c" stroke="#e0304e" stroke-width="2"/>
                                <circle cx="107" cy="71" r="11" fill="#637f4c" stroke="#75a03a" stroke-width="1.500"/><circle cx="60" cy="120" r="11" fill="#3f5c7d" stroke="#35659d" stroke-width="1.500"/>
                                <text x="60" y="30">Z</text><text x="13" y="77">Y</text>
                            </svg>
                            <div class="nav-buttons">
                                <button aria-label="缩放"><svg viewBox="0 0 24 24"><circle cx="14" cy="9" r="9" fill="currentColor"/><path d="M7 15l-6 7" stroke="currentColor" stroke-width="3"/><path d="M14 4v10M9 9h10" stroke="#555" stroke-width="1.500"/></svg></button>
                                <button aria-label="平移"><svg viewBox="0 0 24 24"><path d="M8 23L1 13q0-2 3-1l3 3L5 5q1-3 3 0l2 7V2q2-3 3 0l1 10 2-9q2-2 3 1l-1 9 3-5q3-1 2 2l-5 12q-4 3-8 1z" fill="currentColor"/></svg></button>
                                <button aria-label="相机"><svg viewBox="0 0 24 24"><g fill="none" stroke="currentColor" stroke-width="1.800"><circle cx="6" cy="8" r="4.500"/><circle cx="17" cy="5.500" r="4.500"/><path d="M7 15h10v8H7zM9 12h8M3 17v4"/></g><path d="M18 19l6-4v8z" fill="currentColor"/></svg></button>
                                <button aria-label="透视"><svg viewBox="0 0 24 24"><path d="M5 2h14l4 21H1zM10 2L8 23M14 2l2 21M4 8h16M3 15h18" fill="none" stroke="currentColor" stroke-width="1.800"/></svg></button>
                            </div>
                        </div>
                        <button class="region-toggle"><svg class="arrow"><use href="#i-left"/></svg></button>
                    </div>
                </section>
            </div>

            <section class="area node-editor">
                <div class="area-header">
                    <button class="drop"><svg class="icon"><use href="#i-geo"/></svg><svg class="chev"><use href="#i-chev"/></svg></button>
                    <label class="select tree-select"><select aria-label="节点树类型"><option>修改器</option></select><svg class="chev"><use href="#i-chev"/></svg></label>
                    <div class="menu"><button>视图</button><button>选择</button><button>添加</button><button>节点</button></div>
                    <div class="id-block node-block">
                        <button class="drop"><svg class="icon"><use href="#i-nodes"/></svg><svg class="chev"><use href="#i-chev"/></svg></button>
                        <input type="text" value="Geometry Nodes" aria-label="节点组">
                        <button class="tool"><svg class="icon dim"><use href="#i-shield"/></svg></button><button class="tool"><svg class="icon"><use href="#i-copy"/></svg></button><button class="tool"><svg class="icon"><use href="#i-x"/></svg></button>
                    </div>
                    <svg class="icon dim"><use href="#i-pin"/></svg>
                    <div class="view-tools">
                        <button class="tool"><svg class="icon"><use href="#i-up"/></svg></button>
                        <div class="group"><button class="tool"><svg class="icon"><use href="#i-magnet"/></svg></button><button class="drop"><svg class="icon"><use href="#i-grid"/></svg><svg class="chev"><use href="#i-chev"/></svg></button></div>
                        <div class="group"><button class="tool on"><svg class="icon"><use href="#i-overlay"/></svg></button><button class="tool dark"><svg class="chev"><use href="#i-chev"/></svg></button></div>
                    </div>
                </div>
                <div class="node-canvas">
                    <svg class="links">
                        <path d="M414 290C480 290 560 299 606 304S990 346 1137 362S1500 404 1562 405" class="link-back"/>
                        <path d="M414 290C480 290 560 299 606 304S990 346 1137 362S1500 404 1562 405" class="link dashed"/>
                        <path d="M1414 152C1480 152 1490 300 1556 408" class="link-back"/>
                        <path d="M1414 152C1480 152 1490 300 1556 408" class="link lilac"/>
                        <path d="M1414 103C1492 103 1502 184 1580 212" class="link mint"/>
                        <path d="M414 242L607 254" class="link mint"/>
                    </svg>
                    <article class="node group-input">
                        <h2><svg class="node-chev"><use href="#i-chev"/></svg>组输入</h2>
                        <p class="output">几何数据<i class="socket geo"></i></p>
                        <p class="output">缩放<i class="socket diamond"></i></p>
                        <p class="output"><i class="socket empty"></i></p>
                    </article>
                    <article class="node group-node">
                        <h2><svg class="node-chev"><use href="#i-chev"/></svg>genju-mian-faxiang-panduan-suofang-zhouxiang<svg class="node-icon"><use href="#i-nodes"/></svg></h2>
                        <p class="output">几何数据<i class="socket geo"></i></p>
                        <p class="output">输出<i class="socket diamond violet"></i></p>
                        <div class="node-field">
                            <button><svg class="field-icon"><use href="#i-nodes"/></svg><svg class="chev"><use href="#i-chev"/></svg></button>
                            <input type="text" value="genju-mian-faxiang-panduan-suofang-zhouxiang" aria-label="节点组名称">
                            <button class="fake-user"><svg class="field-icon"><use href="#i-shieldon"/></svg></button>
                        </div>
                        <p class="input">几何数据<i class="socket geo"></i></p>
                    </article>
                    <nav class="crumbs">
                        <svg class="arrow"><use href="#i-right"/></svg>
                        <a href="#"><svg class="icon"><use href="#i-object"/></svg>Cube</a>
                        <svg class="arrow"><use href="#i-right"/></svg>
                        <a href="#"><svg class="icon"><use href="#i-geo"/></svg>GeometryNodes</a>
                        <svg class="arrow"><use href="#i-right"/></svg>
                        <a href="#"><svg class="icon"><use href="#i-nodes"/></svg>Geometry Nodes</a>
                        <svg class="arrow"><use href="#i-right"/></svg>
                        <a href="#"><span class="icon users"><svg class="icon"><use href="#i-nodes"/></svg><sub>2</sub></span>yidonglou</a>
                        <svg class="arrow"><use href="#i-right"/></svg>
                        <a href="#"><svg class="icon"><use href="#i-nodes"/></svg>qitaceng-jiegou</a>
                        <svg class="arrow"><use href="#i-right"/></svg>
                        <a href="#"><svg class="icon"><use href="#i-nodes"/></svg>yimianqiang-chuang-jiegou</a>
                        <svg class="arrow"><use href="#i-right"/></svg>
                        <a href="#"><svg class="icon"><use href="#i-nodes"/></svg>boli-jiegou-B</a>
                        <svg class="arrow"><use href="#i-right"/></svg>
                        <a href="#"><svg class="icon"><use href="#i-nodes"/></svg>NodeGroup</a>
                        <svg class="arrow toggle"><use href="#i-left"/></svg>
                    </nav>
                    <div class="scroll-x"></div>
                    <div class="scroll-y"></div>
                    <svg class="pointer" viewBox="0 0 17 26"><path d="M1 1v21l5-4 4 7 3-2-4-7 7-1z" fill="#fff" stroke="#222"/></svg>
                </div>
            </section>

            <section class="area timeline">
                <div class="area-header">
                    <button class="drop"><svg class="icon"><use href="#i-clock"/></svg><svg class="chev"><use href="#i-chev"/></svg></button>
                    <div class="group">
                        <label class="select play-select"><select aria-label="回放"><option>回放</option></select><svg class="chev"><use href="#i-chev"/></svg></label>
                        <label class="select play-select"><select aria-label="插帧"><option>插帧</option></select><svg class="chev"><use href="#i-chev"/></svg></label>
                    </div>
                    <div class="menu"><button>视图</button><button>标记</button></div>
                    <div class="group record"><button class="tool"><svg class="icon"><use href="#i-record"/></svg></button><button class="tool dark faded"><svg class="chev"><use href="#i-chev"/></svg></button></div>
                    <div class="group transport"><button class="tool"><svg class="icon"><use href="#i-first"/></svg></button><button class="tool"><svg class="icon"><use href="#i-prevkey"/></svg></button><button class="tool"><svg class="icon"><use href="#i-back"/></svg></button><button class="tool"><svg class="icon"><use href="#i-play"/></svg></button><button class="tool"><svg class="icon"><use href="#i-nextkey"/></svg></button><button class="tool"><svg class="icon"><use href="#i-last"/></svg></button></div>
                    <div class="frame-range">
                        <input class="current" type="text" value="247" aria-label="当前帧">
                        <div class="group"><button class="tool"><svg class="icon"><use href="#i-stopwatch"/></svg></button><label class="frame">起始<input type="text" value="1"></label><label class="frame">结束<input type="text" value="250"></label></div>
                    </div>
                </div>
                <div class="ruler">
                    <ol><li>30</li><li>40</li><li>50</li><li>60</li><li>70</li><li>80</li><li>90</li><li>100</li><li>110</li><li>120</li><li>130</li><li>140</li><li>150</li><li>160</li><li>170</li><li>180</li><li>190</li><li>200</li><li>210</li><li>220</li><li>230</li><li>240</li></ol>
                    <div class="range-bar"></div>
                    <span class="playhead">247</span>
                    <svg class="arrow"><use href="#i-right"/></svg>
                </div>
            </section>
        </div>

        <aside class="side-column">
            <section class="area outliner">
                <div class="area-header">
                    <button class="drop"><svg class="icon"><use href="#i-outliner"/></svg><svg class="chev"><use href="#i-chev"/></svg></button>
                    <button class="drop"><svg class="icon"><use href="#i-layers"/></svg><svg class="chev"><use href="#i-chev"/></svg></button>
                    <label class="search"><svg class="icon"><use href="#i-search"/></svg><input type="text" placeholder="搜索" aria-label="搜索大纲"></label>
                    <button class="tool dark filter"><svg class="icon"><use href="#i-filterline"/></svg></button>
                </div>
                <ul class="outline">
                    <li><svg class="icon"><use href="#i-coll"/></svg><span>场景集合</span></li>
                    <li class="level-1"><svg class="chev big"><use href="#i-chev"/></svg><span class="badge"><svg class="icon"><use href="#i-coll"/></svg></span><span class="latin">Collection</span>
                        <div class="toggles"><input type="checkbox" checked aria-label="启用集合"><svg class="icon"><use href="#i-eye"/></svg><svg class="icon"><use href="#i-camera"/></svg></div></li>
                    <li class="level-2"><svg class="arrow"><use href="#i-right"/></svg><span class="badge orange"><svg class="icon"><use href="#i-tri"/></svg></span><span class="latin">Cube</span>
                        <div class="links-icons"><svg class="icon periwinkle"><use href="#i-wrenchline"/></svg><svg class="icon green"><use href="#i-mesh"/></svg></div>
                        <div class="toggles"><svg class="icon"><use href="#i-eye"/></svg><svg class="icon"><use href="#i-camera"/></svg></div></li>
                </ul>
                <div class="outline-scroll"></div>
            </section>

            <section class="area properties">
                <div class="area-header">
                    <button class="drop"><svg class="icon"><use href="#i-props"/></svg><svg class="chev"><use href="#i-chev"/></svg></button>
                    <label class="search"><svg class="icon"><use href="#i-search"/></svg><input type="text" placeholder="搜索" aria-label="搜索属性"></label>
                    <button class="tool dark"><svg class="chev"><use href="#i-chev"/></svg></button>
                </div>
                <div class="prop-main">
                    <nav class="prop-tabs">
                        <a href="#" class="apart"><svg class="icon"><use href="#i-tools"/></svg></a>
                        <a href="#"><svg class="icon"><use href="#i-render"/></svg></a>
                        <a href="#"><svg class="icon"><use href="#i-output"/></svg></a>
                        <a href="#"><svg class="icon"><use href="#i-layers"/></svg></a>
                        <a href="#"><svg class="icon"><use href="#i-scene"/></svg></a>
                        <a href="#" class="apart red"><svg class="icon"><use href="#i-world"/></svg></a>
                        <a href="#" class="apart"><svg class="icon"><use href="#i-collline"/></svg></a>
                        <a href="#" class="orange"><svg class="icon"><use href="#i-object"/></svg></a>
                        <a href="#" class="blue active"><svg class="icon"><use href="#i-wrench"/></svg></a>
                        <a href="#" class="blue"><svg class="icon"><use href="#i-particles"/></svg></a>
                        <a href="#" class="blue"><svg class="icon"><use href="#i-physics"/></svg></a>
                        <a href="#" class="blue"><svg class="icon"><use href="#i-constraint"/></svg></a>
                        <a href="#" class="green"><svg class="icon"><use href="#i-mesh"/></svg></a>
                        <a href="#" class="apart red"><svg class="icon"><use href="#i-mat"/></svg></a>
                        <a href="#" class="red"><svg class="icon"><use href="#i-checker"/></svg></a>
                    </nav>
                    <div class="prop-body">
                        <div class="prop-path latin"><svg class="icon"><use href="#i-object"/></svg><span>C...</span><svg class="arrow"><use href="#i-right"/></svg><svg class="icon"><use href="#i-geo"/></svg><span>Geometry...</span><svg class="icon dim"><use href="#i-pin"/></svg></div>
                        <button class="add-modifier"><svg class="icon"><use href="#i-plus"/></svg><span>添加修改器</span></button>
                        <div class="modifier">
                            <div class="modifier-head">
                                <svg class="chev big"><use href="#i-chev"/></svg><svg class="icon"><use href="#i-geo"/></svg>
                                <div class="group"><button class="tool"><svg class="icon"><use href="#i-mesh"/></svg></button><button class="tool on"><svg class="icon"><use href="#i-editmode"/></svg></button><button class="tool on"><svg class="icon"><use href="#i-monitor"/></svg></button><button class="tool on"><svg class="icon"><use href="#i-camera"/></svg></button><button class="tool dark"><svg class="chev"><use href="#i-chev"/></svg></button></div>
                                <button class="plain"><svg class="icon"><use href="#i-x"/></svg></button>
                                <svg class="grip" viewBox="0 0 16 8"><path d="M1 2h15M1 6h15" stroke="currentColor" stroke-width="2" stroke-dasharray="2 2"/></svg>
                            </div>
                            <div class="id-block">
                                <button class="drop"><svg class="icon"><use href="#i-nodes"/></svg><svg class="chev"><use href="#i-chev"/></svg></button>
                                <input type="text" value="Geometry ..." aria-label="节点组">
                                <button class="tool"><svg class="icon dim"><use href="#i-shield"/></svg></button><button class="tool"><svg class="icon"><use href="#i-copy"/></svg></button><button class="tool"><svg class="icon"><use href="#i-x"/></svg></button>
                            </div>
                            <div class="prop-row"><label for="size-x">尺寸 X</label><input id="size-x" type="text" value="20 mm"><i class="dot"></i></div>
                            <div class="prop-row"><label for="size-y">尺寸 Y</label><input id="size-y" type="text" value="20 mm"><i class="dot"></i></div>
                            <div class="prop-row"><label for="vert-x">顶点 X</label><input id="vert-x" type="text" value="4"><i class="dot"></i></div>
                            <div class="prop-row"><label for="vert-y">顶点 Y</label><input id="vert-y" type="text" value="6"><i class="dot"></i></div>
                            <div class="prop-row"><label for="gaodu-1">gaodu-...</label><input id="gaodu-1" type="text" value="0.010"><button class="tool"><svg class="icon"><use href="#i-sheet"/></svg></button><i class="dot"></i></div>
                            <div class="prop-row"><label for="gaodu-2">gaodu-x...</label><input id="gaodu-2" type="text" value="0.030"><button class="tool"><svg class="icon"><use href="#i-sheet"/></svg></button><i class="dot"></i></div>
                            <div class="prop-row"><label for="gaodu-3">gaodu-x...</label><input id="gaodu-3" type="text" value="-0.500"><button class="tool"><svg class="icon"><use href="#i-sheet"/></svg></button><i class="dot"></i></div>
                            <button class="manage"><svg class="arrow"><use href="#i-right"/></svg>管理</button>
                        </div>
                    </div>
                </div>
            </section>
        </aside>
    </main>

    <footer class="statusbar">
        <span class="hint"><svg><use href="#i-lmb"/></svg>选择</span>
        <span class="hint"><svg><use href="#i-mmb"/></svg>平移视图</span>
        <span class="hint"><svg><use href="#i-rmb"/></svg>节点</span>
        <div class="stats">
            <span>Collection</span>|<span>Cube</span>|<span>顶点:15,164</span>|<span>面:11,168</span>|<span>三角面:22,602</span>|<span>物体:0/36</span>|<span>时长: 00:10+10 (帧 247/250)</span>|<span>内存: 56.4 MiB</span>|<span>显存: 0.5/2</span>
        </div>
    </footer>

    <div class="watermark">
        <svg viewBox="0 0 38 38"><path fill-rule="evenodd" d="M5 0h28q5 0 5 5v28q0 5-5 5H5q-5 0-5-5V5q0-5 5-5zM4 17q6-12 16-12 12 2 14 14-2 6-8 9 2-8-4-9-6 2-7 12-4-2-4-8z" fill="currentColor"/></svg>
        tafe.cc
    </div>
</body>
</html>
```
FILE: styles.css
```css
* {
    margin: 0;
    padding: 0;
    box-sizing: border-box;
}

body {
    font-family: Inter, "Noto Sans CJK SC", sans-serif;
    font-size: 17px;
    line-height: 24px;
    font-feature-settings: "tnum";
    background: #161616;
    color: #e2e2e2;
    display: flex;
    flex-direction: column;
    height: 100vh;
    min-height: 900px;
    overflow: hidden;
    white-space: nowrap;
    position: relative;
}

ul, ol {
    list-style: none;
}

a {
    color: inherit;
    text-decoration: none;
}

button, input, select {
    font: inherit;
    font-feature-settings: inherit;
    color: inherit;
    background: none;
    border: 0;
    min-width: 0;
}

select {
    appearance: none;
    flex: 1;
}

svg {
    display: block;
    flex: none;
}

.sprite {
    position: absolute;
    width: 0;
    height: 0;
}

.icon {
    width: 22px;
    height: 22px;
}

.chev {
    width: 12px;
    height: 12px;
}

.chev.big {
    width: 16px;
    height: 16px;
}

.arrow {
    width: 12px;
    height: 16px;
}

.latin {
    font-size: 16px;
}

.dim {
    opacity: 0.5;
}

.faded {
    opacity: 0.4;
}

/* Title bar */
.titlebar {
    background: #fff;
    color: #000;
    flex: none;
    height: 34px;
    display: flex;
    align-items: center;
    padding: 0 2px 0 3px;
}

.titlebar h1 {
    font-family: "Noto Sans", sans-serif;
    font-size: 18px;
    font-weight: 400;
    margin-left: 7px;
    flex: 1;
}

.app-icon {
    color: #e08a2c;
}

.logo-dot {
    fill: #2a5c9c;
}

.window-buttons {
    display: flex;
}

.window-buttons button {
    width: 70px;
    display: flex;
    justify-content: center;
}

.window-buttons svg {
    width: 16px;
    height: 16px;
}

/* Top bar */
.topbar {
    flex: none;
    height: 40px;
    display: flex;
    align-items: center;
    padding: 0 12px 0 14px;
}

.topbar-logo {
    margin-right: 6px;
}

.menu {
    display: flex;
    gap: 22px;
    padding: 0 9px;
}

.lang-button {
    width: 115px;
    height: 29px;
    background: #545454;
    margin-left: 2px;
}

.theme-button {
    display: flex;
    align-items: center;
    gap: 15px;
    margin-left: 12px;
}

.theme-button svg {
    width: 12px;
    height: 12px;
}

.tabs {
    display: flex;
    gap: 1px;
    align-self: flex-end;
    margin: 0 auto 0 34px;
    color: #989898;
}

.tabs a, .tabs button {
    height: 31px;
    padding: 2px 14px;
    border-radius: 6px 6px 0 0;
}

.tabs a.active {
    background: #303030;
    color: #fff;
}

.tabs button {
    padding: 5px 5px;
}

.id-block {
    display: flex;
    align-items: center;
    height: 28px;
    background: #1d1d1d;
    border-radius: 5px;
    overflow: hidden;
}

.id-block input {
    flex: 1;
    padding-left: 11px;
    font-size: 16px;
}

.id-block > .dim {
    margin-right: 5px;
}

.id-block .tool {
    width: 28px;
    border-radius: 0;
}

.id-block .off {
    background: #2c2c2c;
    color: #777;
}

.scene-block {
    width: 247px;
}

.layer-block {
    width: 219px;
    margin-left: 9px;
}

/* Shared widgets */
.drop {
    display: flex;
    align-items: center;
    justify-content: center;
    gap: 2px;
    width: 43px;
    height: 28px;
    background: #262626;
    border-radius: 5px;
    flex: none;
}

.select {
    display: flex;
    align-items: center;
    gap: 9px;
    height: 28px;
    padding: 0 5px;
    background: #262626;
    border-radius: 5px;
    color: #e6e6e6;
}

.select > select:first-child {
    padding-left: 6px;
}

.tool {
    width: 27px;
    height: 28px;
    background: #4e4e4e;
    border-radius: 4px;
    display: flex;
    align-items: center;
    justify-content: center;
    flex: none;
}

.tool.on {
    background: #4a70b0;
    color: #fff;
}

.tool.dark {
    background: #262626;
}

.shading .tool {
    color: #b4b4b4;
}

.shading .tool.on {
    color: #fff;
}

.group {
    display: flex;
    gap: 1px;
}

.group > * {
    border-radius: 0;
}

.group > :first-child {
    border-radius: 5px 0 0 5px;
}

.group > :last-child {
    border-radius: 0 5px 5px 0;
}

.search {
    display: flex;
    align-items: center;
    gap: 10px;
    height: 28px;
    padding: 0 6px;
    background: #1c1c1c;
    border-radius: 5px;
}

.search input {
    width: 100%;
}

.search input::placeholder {
    color: #6a6a6a;
}

.plain {
    display: flex;
    align-items: center;
    gap: 7px;
}

/* Editor areas */
.workspace {
    flex: 1;
    min-height: 0;
    display: flex;
    gap: 4px;
}

.main-column {
    flex: 1;
    min-width: 0;
    display: flex;
    flex-direction: column;
    gap: 4px;
}

.side-column {
    width: 345px;
    display: flex;
    flex-direction: column;
    gap: 4px;
}

.top-row {
    flex: 0 1 452px;
    min-height: 0;
    display: flex;
    gap: 4px;
}

.area {
    background: #303030;
    border-radius: 7px;
    overflow: hidden;
    position: relative;
    min-height: 0;
    display: flex;
    flex-direction: column;
}

.area-header {
    flex: none;
    height: 39px;
    display: flex;
    align-items: center;
    gap: 11px;
    padding: 0 11px;
}

/* Spreadsheet */
.spreadsheet {
    width: 291px;
    flex: none;
}

.state-select {
    width: 131px;
    flex: none;
}

.object-name {
    display: flex;
    gap: 14px;
    margin-left: 3px;
}

.sheet-body {
    flex: 1;
    min-height: 0;
    display: flex;
    padding-top: 12px;
}

.dataset-tree {
    width: 210px;
    margin-left: 14px;
    padding: 4px 5px 0 8px;
    background: #252525;
    overflow: hidden;
}

.dataset-tree li {
    height: 32px;
    display: flex;
    align-items: center;
    gap: 9px;
}

.dataset-tree li.child {
    margin-left: 8px;
    padding-left: 33px;
    border-left: 1px solid #3c3c3c;
}

.dataset-tree span {
    margin-left: 3px;
}

.dataset-tree em {
    font-style: normal;
    color: #6e6e6e;
    margin-left: auto;
    padding-right: 5px;
}

.dataset-tree li.selected {
    background: #4a70b0;
    border-radius: 7px;
    margin: 3px 0 0 -2px;
}

.tree-scroll {
    width: 6px;
    margin: 0 3px 48px 7px;
    background: #3a3a3a;
    border-radius: 3px;
}

.row-numbers {
    width: 40px;
    margin-top: 15px;
    padding-right: 3px;
    border-top: 1px solid #222;
    border-right: 1px solid #282828;
    text-align: right;
    color: #c4c4c4;
    overflow: hidden;
}

.row-numbers li {
    height: 29px;
    line-height: 31px;
}

.clipped-column {
    padding: 19px 0 0 5px;
    overflow: hidden;
    color: #b0b0b0;
}

.clipped-column svg {
    width: 8px;
    height: 16px;
    margin-bottom: 13px;
}

.sheet-footer {
    height: 37px;
    display: flex;
    align-items: center;
    justify-content: flex-end;
    gap: 16px;
    padding-right: 12px;
}

.sheet-footer b {
    width: 1px;
    height: 20px;
    background: #ccc;
}

/* 3D viewport */
.viewport {
    flex: 1;
    min-width: 0;
    background: #3d3d3d;
}

.scene {
    position: absolute;
    inset: 0;
    width: 100%;
    height: 100%;
}

.view-header, .tool-settings, .view-body {
    position: relative;
}

.view-header {
    background: rgba(52, 52, 52, 0.75);
}

.mode-select {
    width: 128px;
}

.transform-tools, .view-tools {
    display: flex;
    align-items: center;
    gap: 10px;
}

.transform-tools {
    margin-left: 34px;
}

.view-tools {
    margin-left: auto;
}

.orient-select {
    width: 89px;
    gap: 5px;
}

.tool-settings {
    display: flex;
    justify-content: space-between;
    height: 36px;
}

.settings-left, .settings-right {
    display: flex;
    align-items: center;
    background: rgba(52, 52, 52, 0.75);
    padding: 0 11px;
}

.settings-right {
    border-radius: 0 0 0 7px;
    padding-left: 14px;
}

.coord-select {
    width: 140px;
    margin: 0 16px 0 9px;
}

.drag-select {
    width: 76px;
    margin: 0 28px 0 14px;
}

.settings-left .plain {
    margin-right: 8px;
}

.settings-left .group .drop {
    width: 44px;
}

.view-search {
    width: 315px;
    margin: 0 3px;
}

.options-select {
    width: 68px;
}

.view-body {
    display: flex;
    flex: 1;
    padding: 3px 0 0 11px;
}

.toolbar {
    display: flex;
    flex-direction: column;
    gap: 2px;
}

.toolbar button {
    width: 58px;
    height: 48px;
    background: #282828;
    border-radius: 3px;
    display: flex;
    align-items: center;
    justify-content: center;
}

.toolbar button.active {
    background: #4a70b0;
    color: #fff;
}

.toolbar .split {
    margin-top: 7px;
}

.toolbar .more {
    background: linear-gradient(135deg, transparent 93%, #8a8a8a 93%) no-repeat 50% 50% / 50px 42px, #282828;
}

.toolbar svg {
    width: 36px;
    height: 36px;
}

.view-info {
    margin-left: 26px;
    padding-top: 8px;
    color: #fff;
}

.view-info p {
    margin-bottom: 4px;
}

.view-info kbd {
    display: block;
    font: 41px/48px Inter, sans-serif;
    margin: 48px 0 18px 20px;
}

.mouse-keys {
    width: 46px;
    height: 60px;
    margin-left: 21px;
}

.view-nav {
    margin-left: auto;
    width: 120px;
    display: flex;
    flex-direction: column;
    align-items: flex-end;
}

.gizmo {
    width: 120px;
    height: 130px;
}

.gizmo text {
    font-size: 16px;
    font-weight: 500;
    fill: #1c1c1c;
    text-anchor: middle;
}

.nav-buttons {
    display: flex;
    flex-direction: column;
    gap: 5px;
    margin-top: 4px;
}

.nav-buttons button {
    width: 40px;
    height: 40px;
    border-radius: 50%;
    background: rgba(70, 70, 70, 0.75);
    color: #eee;
    display: flex;
    align-items: center;
    justify-content: center;
}

.nav-buttons svg {
    width: 24px;
    height: 24px;
}

.region-toggle {
    width: 11px;
    height: 20px;
    margin: 20px 0 0 3px;
    background: #616261;
    border-radius: 4px 0 0 4px;
    overflow: hidden;
    display: flex;
    align-items: center;
    color: #aaa;
}

/* Node editor */
.node-editor {
    flex: 1;
    background: #2b2b2b;
}

.node-editor .area-header {
    height: 36px;
    background: #222;
}

.tree-select {
    width: 100px;
}

.node-block {
    width: 281px;
    margin-left: 207px;
}

.node-canvas {
    flex: 1;
    position: relative;
    overflow: hidden;
}

.links {
    position: absolute;
    inset: 0;
    width: 100%;
    height: 100%;
}

.link, .link-back {
    fill: none;
    stroke-width: 4;
}

.link-back {
    stroke: #555;
}

.dashed {
    stroke: #a5a5a5;
    stroke-dasharray: 16 6;
}

.lilac {
    stroke: #c9c5d8;
    stroke-dasharray: 18 6;
}

.mint {
    stroke: #b5f2db;
    stroke-width: 6;
}

.node {
    position: absolute;
    background: #303030;
    border-radius: 8px;
    box-shadow: 0 4px 14px rgba(0, 0, 0, 0.6);
    font-size: 26px;
    line-height: 40px;
}

.node h2 {
    display: flex;
    align-items: center;
    gap: 9px;
    height: 47px;
    padding-left: 25px;
    background: #1d1d1d;
    border-radius: 7px 7px 0 0;
    font-size: inherit;
    font-weight: 400;
}

.node-chev {
    width: 24px;
    height: 24px;
}

.node p {
    position: relative;
    height: 40px;
    margin-bottom: 8px;
}

.output {
    text-align: right;
    padding-right: 26px;
}

.input {
    padding-left: 22px;
}

.group-input {
    left: 84px;
    top: 163px;
    width: 330px;
    height: 211px;
}

.group-input h2 {
    margin-bottom: 13px;
}

.group-node {
    left: 606px;
    top: 24px;
    width: 809px;
    height: 269px;
    border: 2px solid #eee;
}

.group-node h2 {
    background: #394b24;
    color: #dde5d4;
    font-size: 25px;
    padding: 0 18px 0 24px;
    margin-bottom: 15px;
    height: 43px;
}

.node-icon {
    width: 34px;
    height: 34px;
    margin-left: auto;
}

.socket {
    position: absolute;
    top: 10px;
    right: -10px;
    width: 20px;
    height: 20px;
    border-radius: 50%;
    background: #1be8a3;
    border: 1px solid #1a1a1a;
}

.input .socket {
    right: auto;
    left: -11px;
}

.socket.diamond {
    border-radius: 0;
    background: #a1a1a1;
    transform: rotate(45deg) scale(0.85);
}

.socket.violet {
    background: #6258c0;
}

.socket.empty {
    background: #303030;
    border: 2px solid #8b8b8b;
    width: 22px;
    height: 22px;
    right: -11px;
}

.node-field {
    display: flex;
    height: 43px;
    margin: 8px 25px 11px 22px;
    background: #1c1c1c;
    border-radius: 6px;
    overflow: hidden;
}

.node-field button {
    width: 72px;
    background: #282828;
    display: flex;
    align-items: center;
    justify-content: center;
    gap: 5px;
}

.node-field input {
    flex: 1;
    padding-left: 15px;
    font-size: 25px;
}

.node-field .fake-user {
    width: 46px;
    background: #4a70b0;
    color: #fff;
}

.field-icon {
    width: 34px;
    height: 34px;
}

.node-field .chev {
    width: 16px;
    height: 16px;
}

.crumbs {
    position: relative;
    display: flex;
    align-items: center;
    height: 64px;
    padding-left: 1px;
    font-size: 16px;
    color: #dcdcdc;
}

.crumbs a {
    display: flex;
    align-items: center;
    gap: 13px;
    margin: 0 22px 0 14px;
}

.crumbs .toggle {
    margin-left: auto;
}

.users {
    position: relative;
}

.users sub {
    position: absolute;
    left: 20px;
    top: 3px;
    font-size: 13px;
}

.scroll-x {
    position: absolute;
    left: 8px;
    bottom: 2px;
    width: 56%;
    height: 6px;
    background: #383838;
    border-radius: 3px;
}

.scroll-y {
    position: absolute;
    right: 2px;
    top: 58px;
    width: 6px;
    height: 67%;
    background: #333;
    border-radius: 3px;
}

.pointer {
    position: absolute;
    left: 862px;
    top: 174px;
    width: 17px;
    height: 26px;
}

/* Timeline */
.timeline {
    flex: none;
    background: #1b1b1b;
}

.timeline .area-header {
    height: 39px;
    background: #303030;
}

.timeline .menu {
    margin-left: -4px;
}

.play-select {
    width: 69px;
}

.record {
    margin-left: 323px;
}

.transport {
    margin-left: -2px;
}

.transport .tool {
    width: 28px;
}

.frame-range {
    display: flex;
    gap: 9px;
    margin-left: auto;
}

.current {
    width: 105px;
    height: 28px;
    background: #545454;
    border-radius: 5px;
    text-align: center;
}

.frame {
    display: flex;
    align-items: center;
    width: 127px;
    height: 28px;
    background: #545454;
    padding: 0 20px 0 22px;
}

.frame input {
    flex: 1;
    text-align: right;
}

.ruler {
    position: relative;
    height: 36px;
}

.ruler ol {
    display: flex;
    padding: 5px 32px 0 38px;
    color: #9c9c9c;
}

.ruler li {
    flex: 1;
    text-align: center;
}

.range-bar {
    position: absolute;
    left: 178px;
    right: 78px;
    top: 21px;
    bottom: 1px;
    background: #4c4c4c;
    border-radius: 7px;
}

.playhead {
    position: absolute;
    right: 0;
    top: 3px;
    width: 41px;
    height: 27px;
    line-height: 27px;
    background: #4a70b0;
    border-radius: 5px 0 0 5px;
    text-align: center;
    color: #fff;
}

.ruler .arrow {
    position: absolute;
    left: 0;
    top: 22px;
    opacity: 0.6;
}

/* Outliner */
.outliner {
    background: #282828;
    flex: 0 0 277px;
}

.outliner .search {
    width: 173px;
    margin-left: 12px;
    flex: none;
}

.outliner .filter {
    margin-left: 13px;
}

.outline li {
    display: flex;
    align-items: center;
    gap: 7px;
    height: 29px;
    padding: 0 18px 0 32px;
    color: #c8c8c8;
}

.outline .level-1 {
    padding-left: 34px;
}

.outline .level-2 {
    padding-left: 67px;
}

.badge {
    width: 27px;
    height: 27px;
    display: flex;
    align-items: center;
    justify-content: center;
    background: #484848;
    border-radius: 6px;
}

.toggles {
    display: flex;
    align-items: center;
    gap: 8px;
    margin-left: auto;
    color: #e2e2e2;
}

.toggles input {
    appearance: none;
    width: 15px;
    height: 15px;
    margin-right: 2px;
    background: #e2e2e2;
    border-radius: 2px;
}

.toggles input:checked::before {
    content: "";
    display: block;
    width: 9px;
    height: 5px;
    margin: 3px;
    border: solid #222;
    border-width: 0 0 3px 3px;
    transform: rotate(-45deg);
}

.links-icons {
    display: flex;
    gap: 8px;
    margin-left: 28px;
}

.orange {
    color: #cf8147;
}

.red {
    color: #c3556b;
}

.green {
    color: #25c58c;
}

.periwinkle {
    color: #7a7dc4;
}

.blue {
    color: #6f8ad6;
}

.outline-scroll {
    height: 6px;
    margin: auto 14px 2px 12px;
    background: #363636;
    border-radius: 3px;
}

/* Properties */
.properties {
    flex: 1;
}

.properties .area-header {
    height: 36px;
}

.properties .search {
    width: 172px;
    margin-left: 26px;
}

.properties .area-header .tool {
    margin: 0 3px 0 auto;
}

.prop-main {
    flex: 1;
    display: flex;
}

.prop-tabs {
    width: 42px;
    padding: 13px 0 0 4px;
    background: #1b1b1b;
    color: #b8b8b8;
}

.prop-tabs a {
    display: flex;
    align-items: center;
    justify-content: center;
    height: 38px;
    margin-bottom: 2px;
    border-radius: 5px 0 0 5px;
}

.prop-tabs a.apart {
    margin-bottom: 13px;
}

.prop-tabs a.active {
    background: #303030;
}

.prop-body {
    flex: 1;
    min-width: 0;
    padding: 15px 14px 0 12px;
}

.prop-path {
    display: flex;
    align-items: center;
    gap: 13px;
    padding: 0 2px 0 4px;
}

.prop-path .dim {
    margin-left: auto;
}

.add-modifier {
    display: flex;
    align-items: center;
    width: 100%;
    height: 28px;
    margin: 26px 0 14px;
    padding-left: 8px;
    background: #545454;
    border-radius: 5px;
}

.add-modifier span {
    flex: 1;
}

.modifier {
    background: #3a3a3a;
    border: 1px solid #4d6194;
    border-radius: 6px;
    padding: 6px 12px 1px 10px;
}

.modifier-head {
    display: flex;
    align-items: center;
    height: 28px;
    margin-bottom: 14px;
}

.modifier-head > .icon {
    margin: 0 15px 0 5px;
}

.modifier-head .tool {
    width: 26px;
}

.modifier-head .plain {
    margin-left: 5px;
}

.grip {
    width: 16px;
    height: 8px;
    margin-left: auto;
    color: #aaa;
}

.modifier .tool {
    background: #545454;
}

.modifier .tool.on {
    background: #4a70b0;
}

.modifier .tool.dark {
    background: #262626;
}

.modifier .id-block {
    margin: 0 0 4px 2px;
    gap: 1px;
}

.prop-row {
    display: flex;
    align-items: center;
    height: 36px;
}

.prop-row label {
    width: 84px;
    text-align: right;
    margin-right: 14px;
}

.prop-row input {
    width: 97px;
    height: 27px;
    background: #545454;
    border-radius: 5px;
    text-align: center;
    margin-right: 1px;
}

.dot {
    width: 6px;
    height: 6px;
    margin: 0 10px 0 auto;
    border-radius: 50%;
    background: #e2e2e2;
}

.manage {
    display: flex;
    align-items: center;
    gap: 9px;
    height: 36px;
    padding-left: 10px;
}

/* Status bar */
.statusbar {
    flex: none;
    height: 31px;
    display: flex;
    align-items: center;
    padding-left: 16px;
    background: #181818;
    color: #929292;
    overflow: hidden;
}

.hint {
    display: flex;
    flex: none;
    gap: 7px;
    width: 284px;
}

.hint svg {
    width: 18px;
    height: 24px;
}

.stats {
    display: flex;
    gap: 6px;
    margin-left: 30px;
    font-size: 16px;
}

/* Site mark */
.watermark {
    position: absolute;
    left: 11px;
    bottom: 12px;
    display: flex;
    align-items: center;
    gap: 10px;
    font: bold 36px/38px Inter, sans-serif;
    color: rgba(150, 150, 150, 0.6);
    pointer-events: none;
}

.watermark svg {
    width: 38px;
    height: 38px;
}
```
